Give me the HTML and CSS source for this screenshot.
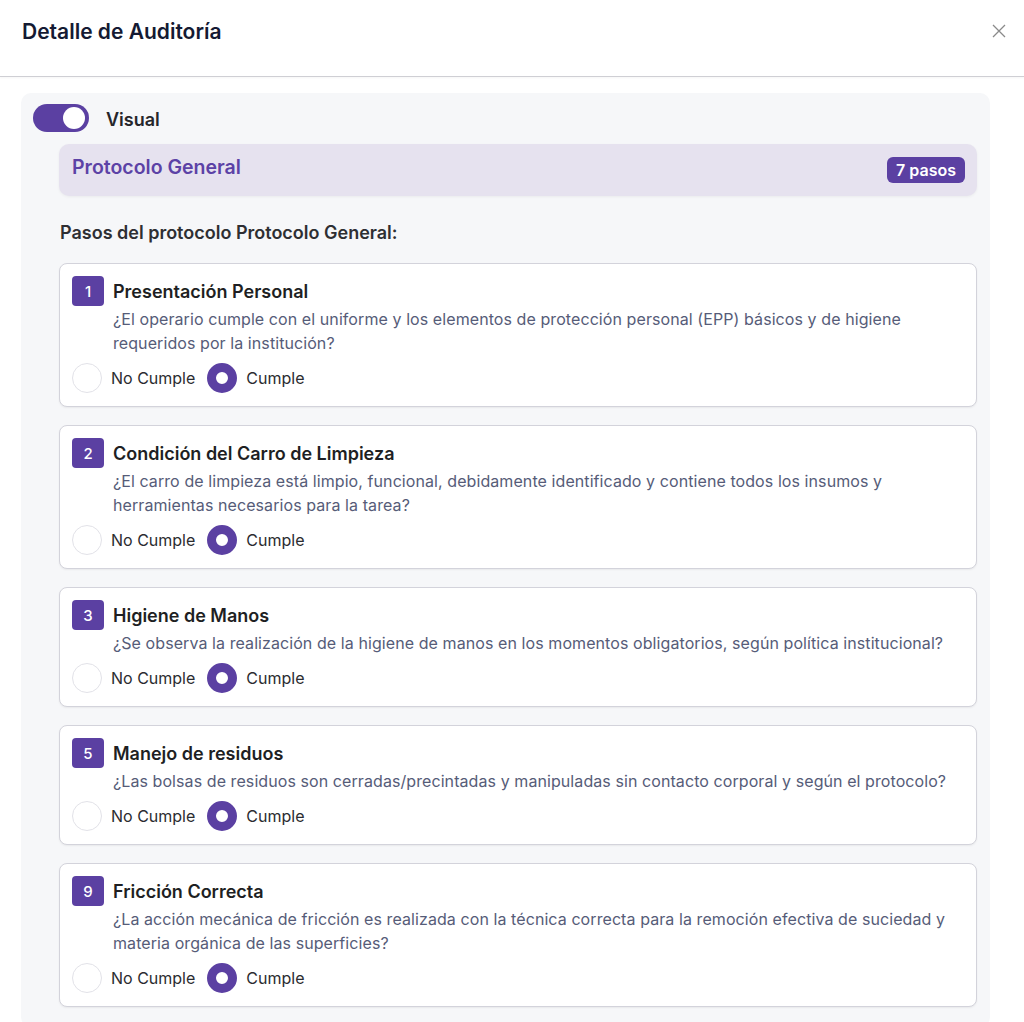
FILE: index.html
```html
<!DOCTYPE html>
<html lang="es">
<head>
  <meta charset="UTF-8" />
  <meta name="viewport" content="width=device-width, initial-scale=1.0"/>
  <title>Detalle de Auditoría</title>
  <link rel="stylesheet" href="styles.css">
</head>
<body>
  <div class="modal">
    <div class="modal-header">
      <h2>Detalle de Auditoría</h2>
      <button class="close" aria-label="Cerrar">
        <svg width="14" height="14" viewBox="0 0 14 14"><path d="M1 1L13 13M13 1L1 13" stroke="#8a8a8a" stroke-width="1.3" fill="none"/></svg>
      </button>
    </div>

    <div class="modal-body">
      <div class="panel">
        <div class="toggle-row">
          <span class="switch"><span class="knob"></span></span>
          <span class="toggle-label">Visual</span>
        </div>

        <div class="protocol">
          <div class="protocol-head">
            <span class="protocol-name">Protocolo General</span>
            <span class="badge">7 pasos</span>
          </div>

          <h3 class="steps-title">Pasos del protocolo Protocolo General:</h3>

          <div class="steps">
            <div class="step">
              <div class="step-head">
                <span class="num">1</span>
                <span class="step-title">Presentación Personal</span>
              </div>
              <p class="step-desc">¿El operario cumple con el uniforme y los elementos de protección personal (EPP) básicos y de higiene requeridos por la institución?</p>
              <div class="options">
                <label class="opt"><span class="radio"></span>No Cumple</label>
                <label class="opt"><span class="radio on"></span>Cumple</label>
              </div>
            </div>

            <div class="step">
              <div class="step-head">
                <span class="num">2</span>
                <span class="step-title">Condición del Carro de Limpieza</span>
              </div>
              <p class="step-desc">¿El carro de limpieza está limpio, funcional, debidamente identificado y contiene todos los insumos y herramientas necesarios para la tarea?</p>
              <div class="options">
                <label class="opt"><span class="radio"></span>No Cumple</label>
                <label class="opt"><span class="radio on"></span>Cumple</label>
              </div>
            </div>

            <div class="step">
              <div class="step-head">
                <span class="num">3</span>
                <span class="step-title">Higiene de Manos</span>
              </div>
              <p class="step-desc">¿Se observa la realización de la higiene de manos en los momentos obligatorios, según política institucional?</p>
              <div class="options">
                <label class="opt"><span class="radio"></span>No Cumple</label>
                <label class="opt"><span class="radio on"></span>Cumple</label>
              </div>
            </div>

            <div class="step">
              <div class="step-head">
                <span class="num">5</span>
                <span class="step-title">Manejo de residuos</span>
              </div>
              <p class="step-desc">¿Las bolsas de residuos son cerradas/precintadas y manipuladas sin contacto corporal y según el protocolo?</p>
              <div class="options">
                <label class="opt"><span class="radio"></span>No Cumple</label>
                <label class="opt"><span class="radio on"></span>Cumple</label>
              </div>
            </div>

            <div class="step">
              <div class="step-head">
                <span class="num">9</span>
                <span class="step-title">Fricción Correcta</span>
              </div>
              <p class="step-desc">¿La acción mecánica de fricción es realizada con la técnica correcta para la remoción efectiva de suciedad y materia orgánica de las superficies?</p>
              <div class="options">
                <label class="opt"><span class="radio"></span>No Cumple</label>
                <label class="opt"><span class="radio on"></span>Cumple</label>
              </div>
            </div>
          </div>
        </div>
      </div>
    </div>
  </div>
</body>
</html>
```

FILE: styles.css
```css
body {
  margin: 0;
  background: #fff;
  font-family: Inter, "Noto Sans", sans-serif;
  color: #1f2024;
  overflow: hidden;
}
.modal-header {
  display: flex;
  justify-content: space-between;
  align-items: center;
  height: 62px;
  padding: 0 14px 14px 22px;
  border-bottom: 1px solid #cfcfd4;
  box-shadow: 0 1px 2px rgba(0, 0, 0, 0.04);
}
.modal-header h2 {
  margin: 0;
  font-size: 21px;
  font-weight: 600;
  color: #141a33;
}
.close {
  background: none;
  border: 0;
  padding: 4px;
  display: flex;
}
.modal-body {
  padding: 16px 34px 0 21px;
}
.panel {
  background: #f6f7f9;
  border-radius: 10px;
  padding: 11px 13px 20px 12px;
}
.toggle-row {
  display: flex;
  align-items: center;
  gap: 17px;
}
.switch {
  width: 56px;
  height: 28px;
  border-radius: 14px;
  background: #5b40a2;
  position: relative;
}
.knob {
  position: absolute;
  right: 4px;
  top: 3px;
  width: 22px;
  height: 22px;
  border-radius: 50%;
  background: #fff;
}
.toggle-label {
  font-size: 18px;
  font-weight: 600;
  color: #26262b;
  margin-top: 2px;
}
.protocol {
  margin: 12px 0 0 26px;
}
.protocol-head {
  display: flex;
  justify-content: space-between;
  align-items: center;
  background: #e6e2ef;
  border-radius: 10px;
  height: 52px;
  padding: 0 12px 0 13px;
  box-shadow: 0 1px 3px rgba(0, 0, 0, 0.05);
}
.protocol-name {
  color: #5c42a6;
  font-size: 19.5px;
  font-weight: 600;
  margin-top: -6px;
}
.badge {
  background: #5b40a2;
  color: #fff;
  font-size: 16px;
  font-weight: 600;
  padding: 4px 9px;
  border-radius: 6px;
  line-height: 18px;
}
.steps-title {
  margin: 26px 0 19px 1px;
  font-size: 18px;
  line-height: 22px;
  font-weight: 600;
  color: #2e2f33;
}
.steps {
  display: flex;
  flex-direction: column;
  gap: 18px;
}
.step {
  background: #fff;
  border: 1px solid #d3d3db;
  border-radius: 8px;
  padding: 12px 12px 13px 12px;
  box-shadow: 0 1px 2px rgba(0, 0, 0, 0.06);
}
.step-head {
  display: flex;
  align-items: center;
  gap: 9px;
}
.num {
  width: 32px;
  height: 30px;
  border-radius: 4px;
  background: #5b40a2;
  color: #fff;
  font-size: 15px;
  font-weight: 500;
  display: flex;
  align-items: center;
  justify-content: center;
}
.step-title {
  font-size: 18px;
  font-weight: 600;
  color: #1e1f23;
}
.step-desc {
  margin: 1px 0 0 41px;
  font-size: 16px;
  line-height: 24px;
  letter-spacing: 0.08px;
  color: #565c78;
}
.options {
  display: flex;
  gap: 12px;
  margin-top: 8px;
}
.opt {
  display: flex;
  align-items: center;
  gap: 9px;
  font-size: 16px;
  color: #2b2c30;
}
.radio {
  width: 28px;
  height: 28px;
  border-radius: 50%;
  border: 1px solid #e2e2e8;
  background: #fff;
  box-sizing: content-box;
}
.radio.on {
  width: 12px;
  height: 12px;
  border: 9px solid #5b40a2;
}
```
